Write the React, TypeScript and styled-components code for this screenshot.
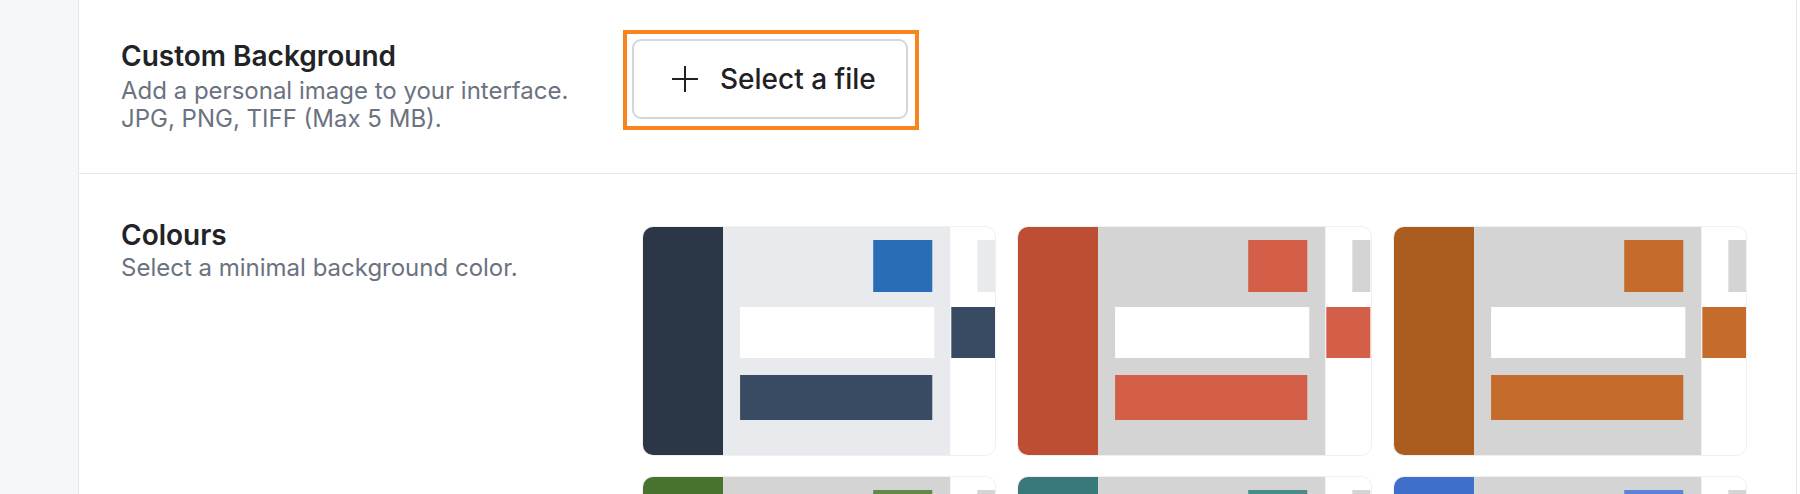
import styled, { createGlobalStyle } from "styled-components";

const GlobalStyle = createGlobalStyle`
  html, body {
    margin: 0;
    padding: 0;
    background: #ffffff;
    font-family: Inter, "Noto Sans", "Liberation Sans", sans-serif;
    -webkit-font-smoothing: antialiased;
  }
  #root {
    min-height: 100vh;
  }
`;

type Swatch = {
  name: string;
  strip: string;
  bg: string;
  square: string;
  bar: string;
};

const swatches: Swatch[] = [
  { name: "slate", strip: "#2b3747", bg: "#e9eaee", square: "#2a6db7", bar: "#394b63" },
  { name: "brick", strip: "#bd4e34", bg: "#d4d4d4", square: "#d35f48", bar: "#d35f48" },
  { name: "rust", strip: "#ab5c1f", bg: "#d4d4d4", square: "#c56b2c", bar: "#c56b2c" },
  { name: "moss", strip: "#47732e", bg: "#d4d4d4", square: "#5f8c42", bar: "#5f8c42" },
  { name: "teal", strip: "#3a797b", bg: "#d4d4d4", square: "#4b8b8c", bar: "#4b8b8c" },
  { name: "azure", strip: "#406ecb", bg: "#d4d4d4", square: "#5a84d9", bar: "#5a84d9" },
];

export default function App() {
  return (
    <>
      <GlobalStyle />
      <Page>
        <Sidebar />
        <Panel>
          <Section>
            <Label>
              <Title>Custom Background</Title>
              <Hint>
                Add a personal image to your interface.
                <br />
                JPG, PNG, TIFF (Max 5 MB).
              </Hint>
            </Label>
            <FocusRing>
              <FileButton type="button">
                <PlusIcon />
                Select a file
              </FileButton>
            </FocusRing>
          </Section>
          <Section $labelWidth={522} $pad={45}>
            <Label $gap={3}>
              <Title>Colours</Title>
              <Hint>Select a minimal background color.</Hint>
            </Label>
            <SwatchGrid>
              {swatches.map((s) => (
                <SwatchCard key={s.name} type="button" aria-label={s.name}>
                  <ThemePreview swatch={s} />
                </SwatchCard>
              ))}
            </SwatchGrid>
          </Section>
        </Panel>
      </Page>
    </>
  );
}

function PlusIcon() {
  return (
    <svg width="28" height="28" viewBox="0 0 28 28" fill="none">
      <path d="M14 1v26M1 14h26" stroke="#1f2124" strokeWidth="2" />
    </svg>
  );
}

function ThemePreview({ swatch }: { swatch: Swatch }) {
  return (
    <svg width="100%" height="100%" viewBox="0 0 352 228" preserveAspectRatio="none">
      <rect x="0" y="0" width="352" height="228" fill="#ffffff" />
      <rect x="0" y="0" width="80" height="228" fill={swatch.strip} />
      <rect x="80" y="0" width="227" height="228" fill={swatch.bg} />
      <rect x="230" y="13" width="59" height="52" fill={swatch.square} />
      <rect x="97" y="80" width="194" height="51" fill="#ffffff" />
      <rect x="97" y="148" width="192" height="45" fill={swatch.bar} />
      <rect x="334" y="13" width="18" height="52" fill={swatch.bg} />
      <rect x="308" y="80" width="44" height="51" fill={swatch.bar} />
    </svg>
  );
}

const Page = styled.div`
  display: flex;
  min-height: 100vh;
`;

const Sidebar = styled.aside`
  width: 78px;
  flex: none;
  background: #f6f7f9;
  border-right: 1px solid #e5e7eb;
`;

const Panel = styled.main`
  flex: 1;
  border-right: 1px solid #e5e7eb;
  margin-right: 3px;
`;

const Section = styled.section<{ $labelWidth?: number; $pad?: number }>`
  display: grid;
  grid-template-columns: ${(p) => p.$labelWidth ?? 511}px 1fr;
  align-items: start;
  padding: ${(p) => p.$pad ?? 40}px 50px 40px 42px;
  border-bottom: 1px solid #e5e7eb;
`;

const Label = styled.div<{ $gap?: number }>`
  display: flex;
  flex-direction: column;
  gap: ${(p) => p.$gap ?? 5}px;
`;

const Title = styled.h2`
  margin: 0;
  font-size: 28px;
  line-height: 32px;
  font-weight: 600;
  color: #212326;
`;

const Hint = styled.p`
  margin: 0;
  font-size: 24px;
  line-height: 28px;
  color: #6b7280;
`;

const FocusRing = styled.div`
  justify-self: start;
  display: inline-flex;
  margin: -10px 0 0 -9px;
  padding: 5px 7px 7px 5px;
  border: 4px solid #f8841c;
`;

const FileButton = styled.button`
  display: inline-flex;
  align-items: center;
  gap: 21px;
  width: 276px;
  height: 80px;
  padding: 0 30px 0 37px;
  box-sizing: border-box;
  border: 2px solid #d3d6db;
  border-radius: 9px;
  background: #ffffff;
  font-family: inherit;
  font-size: 28px;
  font-weight: 500;
  color: #1f2124;
  cursor: pointer;
`;

const SwatchGrid = styled.div`
  display: grid;
  grid-template-columns: repeat(3, 1fr);
  column-gap: 23px;
  row-gap: 22px;
  margin-top: 8px;
`;

const SwatchCard = styled.button`
  display: block;
  height: 228px;
  padding: 0;
  border: none;
  border-radius: 10px;
  overflow: hidden;
  background: #ffffff;
  box-shadow: 0 0 0 1px rgba(0, 0, 0, 0.06);
  cursor: pointer;
`;
